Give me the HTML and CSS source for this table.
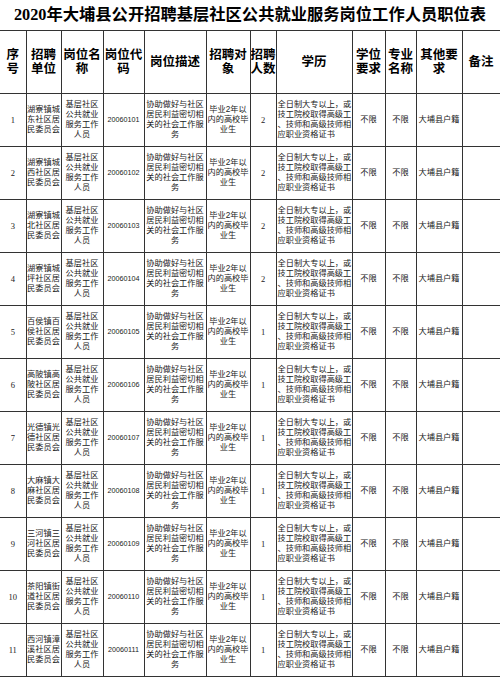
FILE: index.html
```html
<!DOCTYPE html>
<html lang="zh-CN">
<head>
<meta charset="utf-8">
<title>2020年大埔县公开招聘基层社区公共就业服务岗位工作人员职位表</title>
<link rel="stylesheet" href="styles.css">
</head>
<body>
<div class="title">2020年大埔县公开招聘基层社区公共就业服务岗位工作人员职位表</div>
<table class="grid">
<colgroup>
<col class="c-no"><col class="c-unit"><col class="c-pos"><col class="c-code"><col class="c-desc"><col class="c-target"><col class="c-num"><col class="c-edu"><col class="c-deg"><col class="c-major"><col class="c-other"><col class="c-note">
</colgroup>
<thead>
<tr class="head">
<th class="first">序<br>号</th>
<th>招聘<br>单位</th>
<th>岗位名<br>称</th>
<th>岗位代<br>码</th>
<th>岗位描述</th>
<th>招聘对<br>象</th>
<th>招聘<br>人数</th>
<th>学历</th>
<th>学位<br>要求</th>
<th>专业<br>名称</th>
<th>其他要<br>求</th>
<th>备注</th>
</tr>
</thead>
<tbody>
<tr><td class="first num">1</td><td>湖寮镇城<br>东社区居<br>民委员会</td><td>基层社区<br>公共就业<br>服务工作<br>人员</td><td class="code">20060101</td><td>协助做好与社区<br>居民利益密切相<br>关的社会工作服<br>务</td><td>毕业2年以<br>内的高校毕<br>业生</td><td class="num">2</td><td class="edu">全日制大专以上，或<br>技工院校取得高级工<br>、技师和高级技师相<br>应职业资格证书</td><td>不限</td><td>不限</td><td>大埔县户籍</td><td></td></tr>
<tr><td class="first num">2</td><td>湖寮镇城<br>西社区居<br>民委员会</td><td>基层社区<br>公共就业<br>服务工作<br>人员</td><td class="code">20060102</td><td>协助做好与社区<br>居民利益密切相<br>关的社会工作服<br>务</td><td>毕业2年以<br>内的高校毕<br>业生</td><td class="num">2</td><td class="edu">全日制大专以上，或<br>技工院校取得高级工<br>、技师和高级技师相<br>应职业资格证书</td><td>不限</td><td>不限</td><td>大埔县户籍</td><td></td></tr>
<tr><td class="first num">3</td><td>湖寮镇城<br>北社区居<br>民委员会</td><td>基层社区<br>公共就业<br>服务工作<br>人员</td><td class="code">20060103</td><td>协助做好与社区<br>居民利益密切相<br>关的社会工作服<br>务</td><td>毕业2年以<br>内的高校毕<br>业生</td><td class="num">2</td><td class="edu">全日制大专以上，或<br>技工院校取得高级工<br>、技师和高级技师相<br>应职业资格证书</td><td>不限</td><td>不限</td><td>大埔县户籍</td><td></td></tr>
<tr><td class="first num">4</td><td>湖寮镇城<br>坪社区居<br>民委员会</td><td>基层社区<br>公共就业<br>服务工作<br>人员</td><td class="code">20060104</td><td>协助做好与社区<br>居民利益密切相<br>关的社会工作服<br>务</td><td>毕业2年以<br>内的高校毕<br>业生</td><td class="num">2</td><td class="edu">全日制大专以上，或<br>技工院校取得高级工<br>、技师和高级技师相<br>应职业资格证书</td><td>不限</td><td>不限</td><td>大埔县户籍</td><td></td></tr>
<tr><td class="first num">5</td><td>百侯镇百<br>侯社区居<br>民委员会</td><td>基层社区<br>公共就业<br>服务工作<br>人员</td><td class="code">20060105</td><td>协助做好与社区<br>居民利益密切相<br>关的社会工作服<br>务</td><td>毕业2年以<br>内的高校毕<br>业生</td><td class="num">1</td><td class="edu">全日制大专以上，或<br>技工院校取得高级工<br>、技师和高级技师相<br>应职业资格证书</td><td>不限</td><td>不限</td><td>大埔县户籍</td><td></td></tr>
<tr><td class="first num">6</td><td>高陂镇高<br>陂社区居<br>民委员会</td><td>基层社区<br>公共就业<br>服务工作<br>人员</td><td class="code">20060106</td><td>协助做好与社区<br>居民利益密切相<br>关的社会工作服<br>务</td><td>毕业2年以<br>内的高校毕<br>业生</td><td class="num">1</td><td class="edu">全日制大专以上，或<br>技工院校取得高级工<br>、技师和高级技师相<br>应职业资格证书</td><td>不限</td><td>不限</td><td>大埔县户籍</td><td></td></tr>
<tr><td class="first num">7</td><td>光德镇光<br>德社区居<br>民委员会</td><td>基层社区<br>公共就业<br>服务工作<br>人员</td><td class="code">20060107</td><td>协助做好与社区<br>居民利益密切相<br>关的社会工作服<br>务</td><td>毕业2年以<br>内的高校毕<br>业生</td><td class="num">1</td><td class="edu">全日制大专以上，或<br>技工院校取得高级工<br>、技师和高级技师相<br>应职业资格证书</td><td>不限</td><td>不限</td><td>大埔县户籍</td><td></td></tr>
<tr><td class="first num">8</td><td>大麻镇大<br>麻社区居<br>民委员会</td><td>基层社区<br>公共就业<br>服务工作<br>人员</td><td class="code">20060108</td><td>协助做好与社区<br>居民利益密切相<br>关的社会工作服<br>务</td><td>毕业2年以<br>内的高校毕<br>业生</td><td class="num">1</td><td class="edu">全日制大专以上，或<br>技工院校取得高级工<br>、技师和高级技师相<br>应职业资格证书</td><td>不限</td><td>不限</td><td>大埔县户籍</td><td></td></tr>
<tr><td class="first num">9</td><td>三河镇三<br>河社区居<br>民委员会</td><td>基层社区<br>公共就业<br>服务工作<br>人员</td><td class="code">20060109</td><td>协助做好与社区<br>居民利益密切相<br>关的社会工作服<br>务</td><td>毕业2年以<br>内的高校毕<br>业生</td><td class="num">1</td><td class="edu">全日制大专以上，或<br>技工院校取得高级工<br>、技师和高级技师相<br>应职业资格证书</td><td>不限</td><td>不限</td><td>大埔县户籍</td><td></td></tr>
<tr><td class="first num">10</td><td>茶阳镇街<br>道社区居<br>民委员会</td><td>基层社区<br>公共就业<br>服务工作<br>人员</td><td class="code">20060110</td><td>协助做好与社区<br>居民利益密切相<br>关的社会工作服<br>务</td><td>毕业2年以<br>内的高校毕<br>业生</td><td class="num">1</td><td class="edu">全日制大专以上，或<br>技工院校取得高级工<br>、技师和高级技师相<br>应职业资格证书</td><td>不限</td><td>不限</td><td>大埔县户籍</td><td></td></tr>
<tr><td class="first num">11</td><td>西河镇漳<br>溪社区居<br>民委员会</td><td>基层社区<br>公共就业<br>服务工作<br>人员</td><td class="code">20060111</td><td>协助做好与社区<br>居民利益密切相<br>关的社会工作服<br>务</td><td>毕业2年以<br>内的高校毕<br>业生</td><td class="num">1</td><td class="edu">全日制大专以上，或<br>技工院校取得高级工<br>、技师和高级技师相<br>应职业资格证书</td><td>不限</td><td>不限</td><td>大埔县户籍</td><td></td></tr>
</tbody>
</table>
</body>
</html>
```
FILE: styles.css
```css
html, body {
  margin: 0;
  padding: 0;
  background: #fff;
}
body {
  width: 500px;
  overflow: hidden;
}
.title {
  height: 30px;
  line-height: 30px;
  text-align: center;
  white-space: nowrap;
  font-family: "Liberation Serif", "Noto Sans CJK SC", serif;
  font-weight: bold;
  font-size: 16.3px;
  color: #000;
}
.grid {
  border-collapse: collapse;
  table-layout: fixed;
  width: 500px;
}
.c-no { width: 26px; }
.c-unit { width: 35px; }
.c-pos { width: 42px; }
.c-code { width: 41px; }
.c-desc { width: 62px; }
.c-target { width: 44px; }
.c-num { width: 26px; }
.c-edu { width: 76px; }
.c-deg { width: 33px; }
.c-major { width: 31px; }
.c-other { width: 46px; }
.c-note { width: 38px; }
.grid th, .grid td {
  border: 1px solid #333;
  padding: 0;
  text-align: center;
  vertical-align: middle;
  white-space: nowrap;
  overflow: hidden;
}
.grid .first {
  border-left: none;
}
.head {
  height: 63px;
}
.head th {
  font-family: "Liberation Serif", "Noto Sans CJK SC", serif;
  font-weight: bold;
  font-size: 12.5px;
  line-height: 14px;
  color: #000;
}
.grid tbody tr {
  height: 53px;
}
.grid td {
  font-family: "Liberation Sans", "Noto Sans CJK SC", sans-serif;
  font-size: 8.2px;
  line-height: 10px;
  color: #222;
}
.grid td.num {
  font-family: "Liberation Serif", serif;
  font-size: 8.5px;
}
.grid td.code {
  font-family: "Liberation Sans", sans-serif;
  font-size: 7.2px;
}
.grid td.edu {
  text-align: left;
  padding-left: 1px;
}
```
